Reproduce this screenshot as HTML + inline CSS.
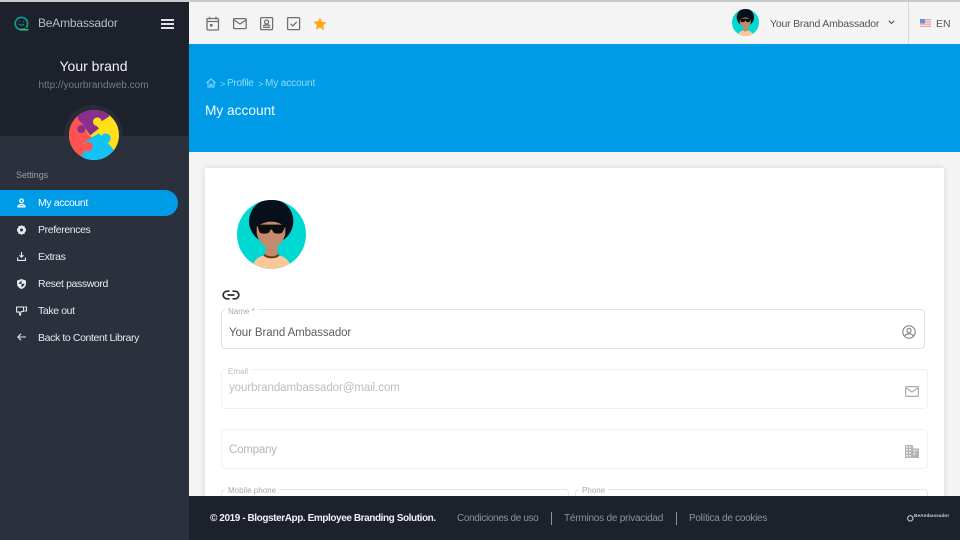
<!DOCTYPE html>
<html><head><meta charset="utf-8"><style>
*{box-sizing:border-box}
html,body{margin:0;padding:0;width:960px;height:540px;overflow:hidden;background:#f4f4f4;font-family:"Liberation Sans",sans-serif}
.a{position:absolute;white-space:nowrap}
svg{position:absolute;overflow:visible}
.m{left:38px;color:#e8eaed;font-size:10.5px;line-height:14px;letter-spacing:-.38px}
.f{position:absolute;border:1px solid #e6e6e6;border-radius:4px;background:#fff}
.l{position:absolute;background:#fff;padding:0 3px;font-size:8px;line-height:9px;color:#aaa}
.fo{color:#8d929b;font-size:10px;line-height:14px}
</style></head><body>
<div class="a" style="left:0;top:0;width:960px;height:2px;background:#c9c9c9;z-index:9"></div>
<!-- topbar -->
<div class="a" style="left:189px;top:1px;width:771px;height:43px;background:#f4f4f4"></div>
<div class="a" style="left:189px;top:44px;width:771px;height:108px;background:#009be6"></div>
<div class="a" style="left:908px;top:1px;width:1px;height:43px;background:#d8d8d8"></div>
<svg style="left:206px;top:16px" width="14" height="15" viewBox="0 0 14 15" fill="none" stroke="#707070" stroke-width="1.3"><rect x="1" y="2.5" width="11.5" height="11.5" rx="1"/><path d="M1 5.5h11.5M3.500 .8v2.600M10 .8v2.600"/><rect x="4" y="8" width="2.500" height="2.500" fill="#666" stroke="none"/></svg>
<svg style="left:233px;top:18px" width="14" height="12" viewBox="0 0 14 12" fill="none" stroke="#707070" stroke-width="1.300"><rect x=".6" y=".6" width="12.600" height="10" rx="1"/><path d="M1 2l6 4 6-4"/></svg>
<svg style="left:260px;top:17px" width="14" height="14" viewBox="0 0 14 14" fill="none" stroke="#707070" stroke-width="1.300"><rect x=".6" y=".6" width="12" height="12" rx="1"/><circle cx="6.600" cy="5" r="2"/><path d="M3 10.300h7.200M3.500 9c0-1.400 6-1.400 6.200 0" stroke-width="1.400"/></svg>
<svg style="left:287px;top:17px" width="14" height="14" viewBox="0 0 14 14" fill="none" stroke="#707070" stroke-width="1.300"><rect x=".6" y=".6" width="12" height="12" rx="1"/><path d="M3.600 6.800l2.200 2.200 4-4.200"/></svg>
<svg style="left:313px;top:17px" width="14" height="14" viewBox="0 0 24 24" fill="#ffa813"><path d="M12 1l3.400 7.300 7.900 1-5.800 5.500 1.500 7.900L12 18l-7 3.700 1.500-7.900L.7 8.300l7.900-1z"/></svg>
<!-- top avatar -->
<svg style="left:732px;top:9px" width="27" height="27" viewBox="0 0 70 70"><defs><clipPath id="c1"><circle cx="35" cy="35" r="35"/></clipPath></defs><g clip-path="url(#c1)"><rect width="70" height="70" fill="#00d8d2"/><path d="M14 72c2-13 11-17 21-17s19 4 21 17z" fill="#fbc79a"/><circle cx="34.700" cy="21.500" r="22.500" fill="#07101a"/><path d="M29 45h12v10c-2 4-10 4-12 0z" fill="#c58a6e"/><path d="M20 27Q35 17 49 27V34Q47 45 35 50 22 45 20 34Z" fill="#c58a6e"/><path d="M20.500 25h28.500v2l-3 6c-1 1.500-7 1.500-9 0l-1.500-3h-1.500l-1.500 3c-2 1.500-8 1.500-9.500 0l-2-6z" fill="#0d0d0d"/></g></svg>
<div class="a" style="left:770px;top:16.500px;font-size:10.5px;line-height:14px;color:#555;letter-spacing:-.2px">Your Brand Ambassador</div>
<svg style="left:888px;top:20px" width="7" height="5" viewBox="0 0 7 5" fill="none" stroke="#555" stroke-width="1.100"><path d="M.8 .8l2.700 2.700L6.200 .8"/></svg>
<svg style="left:920px;top:19px" width="11" height="8" viewBox="0 0 11 8"><rect width="11" height="8" fill="#f2a0a6"/><rect y="1.200" width="11" height="1.100" fill="#e9e9ee"/><rect y="3.500" width="11" height="1.100" fill="#e9e9ee"/><rect y="5.800" width="11" height="1.100" fill="#e9e9ee"/><rect width="5" height="4.400" fill="#6f8fd8"/></svg>
<div class="a" style="left:936px;top:16.500px;font-size:10.5px;line-height:14px;color:#555">EN</div>
<!-- breadcrumb -->
<svg style="left:206px;top:78px" width="10" height="10" viewBox="0 0 10 10" fill="none" stroke="#8fdcf9" stroke-width="1"><path d="M.5 5L5 1l4.500 4M2 4v5h2.200V6.300h1.600V9H8V4"/></svg>
<div class="a" style="left:220px;top:76.500px;font-size:9px;line-height:14px;color:#8fdcf9">&gt;</div>
<div class="a" style="left:227px;top:77px;font-size:10px;line-height:14px;color:#8fdcf9;letter-spacing:-.25px">Profile</div>
<div class="a" style="left:258px;top:76.500px;font-size:9px;line-height:14px;color:#8fdcf9">&gt;</div>
<div class="a" style="left:265px;top:77px;font-size:10px;line-height:14px;color:#8fdcf9;letter-spacing:-.1px">My account</div>
<div class="a" style="left:205px;top:102px;font-size:13.7px;line-height:17px;color:#f2fbff">My account</div>
<!-- card -->
<div class="a" style="left:205px;top:168px;width:739px;height:340px;background:#fff;box-shadow:0 0 6px rgba(0,0,0,.12)"></div>
<svg style="left:237px;top:200px" width="69" height="69" viewBox="0 0 70 70"><defs><clipPath id="c2"><circle cx="35" cy="35" r="35"/></clipPath></defs><g clip-path="url(#c2)"><rect width="70" height="70" fill="#00d8d2"/><path d="M14 72c2-13 11-17 21-17s19 4 21 17z" fill="#fbc79a"/><circle cx="34.700" cy="21.500" r="22.500" fill="#07101a"/><path d="M29 45h12v10c-2 4-10 4-12 0z" fill="#c58a6e"/><path d="M20 27Q35 17 49 27V34Q47 45 35 50 22 45 20 34Z" fill="#c58a6e"/><path d="M27.500 55.500c3 3.500 12 3.500 15 0" stroke="#6b3a25" stroke-width="2.200" fill="none"/><path d="M20.500 25h28.500v2l-3 6c-1 1.500-7 1.500-9 0l-1.500-3h-1.500l-1.500 3c-2 1.500-8 1.500-9.500 0l-2-6z" fill="#0d0d0d"/></g></svg>
<svg style="left:222px;top:290px" width="18" height="10" viewBox="0 0 18 10" fill="none" stroke="#2c2c2c" stroke-width="1.700"><path d="M7.500 1.200H5a3.800 3.800 0 0 0 0 7.600h2.500M10.500 1.200H13a3.800 3.800 0 0 1 0 7.600h-2.500M5.500 5h7"/></svg>
<!-- fields -->
<div class="f" style="left:221px;top:309px;width:704px;height:40px;border-color:#e3e3e3"></div>
<div class="l" style="left:225px;top:307px">Name *</div>
<div class="a" style="left:229px;top:325.500px;font-size:11.5px;line-height:14px;color:#5f5f5f;letter-spacing:-.1px">Your Brand Ambassador</div>
<svg style="left:902px;top:325px" width="14" height="14" viewBox="0 0 14 14" fill="none" stroke="#888" stroke-width="1.200"><circle cx="7" cy="7" r="6.200"/><circle cx="7" cy="5.500" r="2.100"/><path d="M3 11c.5-2.800 7.500-2.800 8 0"/></svg>
<div class="f" style="left:221px;top:369px;width:707px;height:40px;border-color:#f0f0f0"></div>
<div class="l" style="left:225px;top:367px;color:#bbb">Email</div>
<div class="a" style="left:229px;top:381px;font-size:11.5px;line-height:14px;color:#bdbdbd;letter-spacing:-.07px">yourbrandambassador@mail.com</div>
<svg style="left:905px;top:386px" width="14" height="11" viewBox="0 0 14 11" fill="none" stroke="#aaa" stroke-width="1.200"><rect x=".6" y=".6" width="12.800" height="9.800" rx="1"/><path d="M1 2l6 4 6-4"/></svg>
<div class="f" style="left:221px;top:429px;width:707px;height:40px;border-color:#f0f0f0"></div>
<div class="a" style="left:229px;top:442.500px;font-size:11.5px;line-height:14px;color:#b5b5b5;letter-spacing:-.2px">Company</div>
<svg style="left:905px;top:445px" width="14" height="13" viewBox="0 0 14 13" fill="#b5b5b5"><path d="M0 0h8v3.500h6V13H0zM1.200 1.200v1.500h1.500V1.200zm3 0v1.500h1.500V1.200zM1.200 4v1.500h1.500V4zm3 0v1.500h1.500V4zM1.200 7v1.500h1.500V7zm3 0v1.500h1.500V7zm4.500-2v1.500h1.500V5zm2.300 0v1h1V5zM8.700 8v1.500h1.500V8zm-7.500 2v1.500h1.500V10zm3 0v1.500h1.500V10z" fill-rule="evenodd"/></svg>
<div class="f" style="left:221px;top:489px;width:348px;height:40px;border-color:#e6e6e6"></div>
<div class="l" style="left:225px;top:486px">Mobile phone</div>
<div class="f" style="left:575px;top:489px;width:353px;height:40px;border-color:#e6e6e6"></div>
<div class="l" style="left:579px;top:486px">Phone</div>
<!-- footer -->
<div class="a" style="left:189px;top:496px;width:771px;height:44px;background:#1c212b"></div>
<div class="a" style="left:210px;top:512px;font-size:10px;line-height:14px;font-weight:bold;color:#eef0f2;letter-spacing:-.42px">© 2019 - BlogsterApp. Employee Branding Solution.</div>
<div class="a fo" style="left:457px;top:512px;letter-spacing:-.36px">Condiciones de uso</div>
<div class="a" style="left:551px;top:512px;width:1px;height:13px;background:#8d929b"></div>
<div class="a fo" style="left:564px;top:512px;letter-spacing:-.22px">Términos de privacidad</div>
<div class="a" style="left:676px;top:512px;width:1px;height:13px;background:#8d929b"></div>
<div class="a fo" style="left:689px;top:512px;letter-spacing:-.28px">Política de cookies</div>
<svg style="left:907px;top:515px" width="7" height="7" viewBox="0 0 7 7" fill="none" stroke="#cfd3d8" stroke-width="1"><circle cx="3.300" cy="3.300" r="2.700"/></svg>
<div class="a" style="left:914px;top:514px;font-size:4.800px;line-height:6px;font-weight:bold;color:#c8ccd2">BeAmbassador</div>
<!-- sidebar -->
<div class="a" style="left:0;top:0;width:189px;height:136px;background:#1c212b"></div>
<div class="a" style="left:0;top:136px;width:189px;height:404px;background:#2a313d"></div>
<svg style="left:14px;top:16px" width="16" height="15" viewBox="0 0 16 15" fill="none"><path d="M11 12.600A6.200 6.200 0 1 1 13.600 7c0 2-.4 3.500-1.200 5" stroke="#0f9d94" stroke-width="1.700"/><path d="M6 13.300c3 .6 6 .6 8.500.4" stroke="#2ecc71" stroke-width="1.400"/><path d="M5 8c1.500 1.500 3.500 1.500 5 0M5.200 5.500h.8M9 5.500h.8" stroke="#0f9d94"/></svg>
<div class="a" style="left:38px;top:15px;font-size:12px;line-height:16px;color:#b9bcc2;letter-spacing:-.2px">BeAmbassador</div>
<div class="a" style="left:161px;top:19px;width:13px;height:2px;background:#dfe1e4;box-shadow:0 4px 0 #dfe1e4,0 8px 0 #dfe1e4"></div>
<div class="a" style="left:0;top:58px;width:187px;text-align:center;font-size:14px;line-height:17px;color:#f1f2f3">Your brand</div>
<div class="a" style="left:0;top:79px;width:187px;text-align:center;font-size:10px;line-height:14px;color:#767b84">http://yourbrandweb.com</div>
<div class="a" style="left:64px;top:105px;width:59px;height:59px;border-radius:50%;background:#262c37"></div>
<div class="a" style="left:64px;top:136px;width:59px;height:29.500px;border-radius:0 0 30px 30px;background:#2a313d"></div>
<svg style="left:69px;top:110px" width="50" height="50" viewBox="15 15 150 150"><defs><clipPath id="c3"><circle cx="90" cy="90" r="75"/></clipPath></defs><g clip-path="url(#c3)"><rect x="0" y="0" width="180" height="180" fill="#ffe01b"/><path d="M0 30H45L75 92 85 97 60 115 75 175H0z" fill="#ff5353"/><path d="M42 42L60 62 78 92 105 70 95 60 135 35V5H42z" fill="#8b2f8f"/><circle cx="52" cy="72" r="12" fill="#8b2f8f"/><circle cx="100" cy="50" r="13" fill="#ffe01b"/><path d="M85 96L105 85 150 135 175 175H40L60 140 75 125 60 113z" fill="#14c3f5"/><circle cx="125" cy="100" r="15" fill="#14c3f5"/><circle cx="72" cy="125" r="14" fill="#ff5353"/></g></svg>
<div class="a" style="left:16px;top:168px;font-size:9px;line-height:14px;color:#9a9ea6;letter-spacing:-.05px">Settings</div>
<div class="a" style="left:0;top:190px;width:178px;height:26px;background:#009be6;border-radius:0 13px 13px 0"></div>
<svg style="left:17px;top:198px" width="9" height="10" viewBox="0 0 9 10" fill="none" stroke="#fff" stroke-width="1.300"><circle cx="4.500" cy="2.800" r="1.800"/><path d="M1 8.800c0-3 7-3 7 0z"/></svg>
<div class="a m" style="top:196px;color:#fff">My account</div>
<svg style="left:17px;top:225px" width="9" height="10" viewBox="0 0 9 10" fill="#e8eaed"><path d="M4.500 0l1.200 1.100L7.500 1l.3 1.700L9 4v2L7.800 7.300 7.500 9l-1.800-.1L4.500 10 3.300 8.900 1.500 9l-.3-1.700L0 6V4l1.200-1.300L1.500 1l1.800.1z"/><circle cx="4.500" cy="5" r="1.500" fill="#2a313d"/></svg>
<div class="a m" style="top:223px">Preferences</div>
<svg style="left:17px;top:252px" width="9" height="9" viewBox="0 0 9 9" fill="none" stroke="#e8eaed" stroke-width="1.100"><path d="M4.500 0v5M2.500 3.200l2 2 2-2M.6 5.500v2.900h7.800V5.500"/></svg>
<div class="a m" style="top:250px">Extras</div>
<svg style="left:17px;top:279px" width="9" height="10" viewBox="0 0 9 10"><path d="M4.500 0L9 1.600v3c0 2.600-1.800 4.400-4.500 5.400C1.800 9 0 7.200 0 4.600v-3z" fill="#e8eaed"/><path d="M4.500 1.500v3.300H1.300M4.500 4.800h3c-.2 1.500-1.500 2.800-3 3.500z" fill="#2a313d"/></svg>
<div class="a m" style="top:277px">Reset password</div>
<svg style="left:16px;top:306px" width="11" height="10" viewBox="0 0 11 10" fill="none" stroke="#e8eaed" stroke-width="1.100"><path d="M.6 1h7v4.300l-2.600.4-.6 3.500c-1.200-.5-1.200-2-1-3.200H.6zM8.500 1h2v4h-2"/></svg>
<div class="a m" style="top:304px">Take out</div>
<svg style="left:17px;top:333px" width="9" height="8" viewBox="0 0 9 8" fill="none" stroke="#e8eaed" stroke-width="1.100"><path d="M9 4H1M4 .8L.9 4 4 7.200"/></svg>
<div class="a m" style="top:331px">Back to Content Library</div>
</body></html>
